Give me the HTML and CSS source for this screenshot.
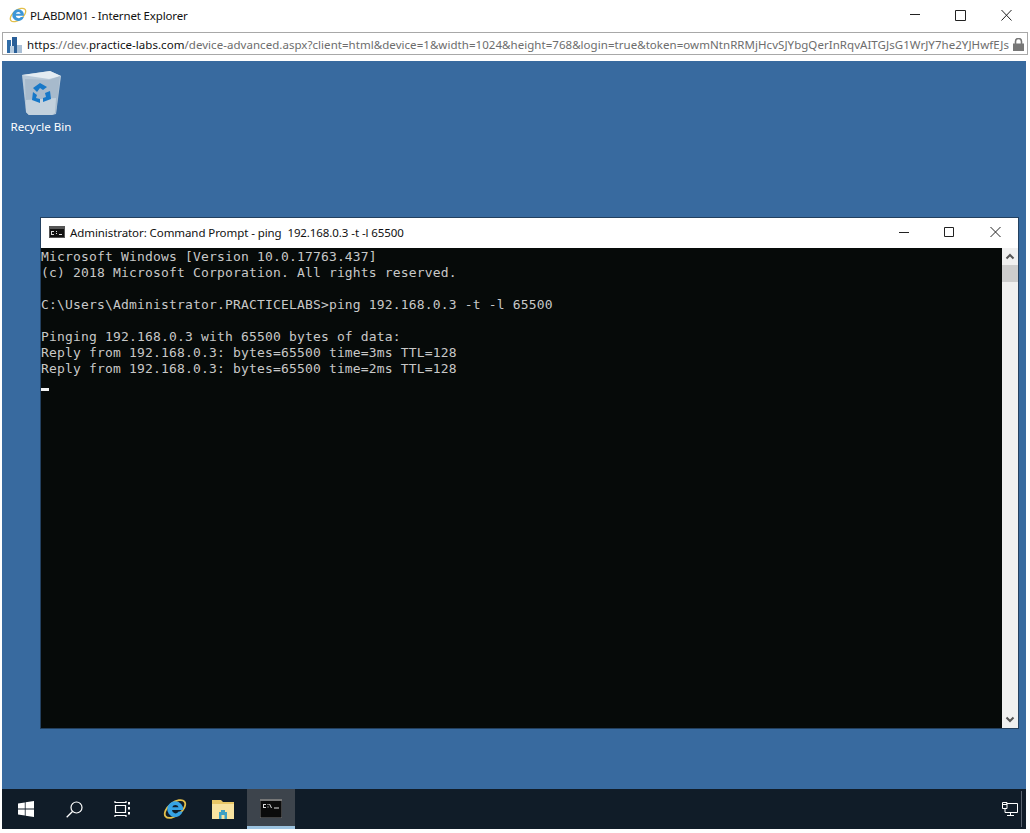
FILE: index.html
```html
<!DOCTYPE html>
<html lang="en">
<head>
<meta charset="utf-8">
<title>PLABDM01 - Internet Explorer</title>
<link rel="stylesheet" href="styles.css">
</head>
<body>
<div class="ie">
  <header class="ie-title">
    <svg class="ie-logo" width="18" height="18" viewBox="0 0 18 18"><ellipse cx="9" cy="9" rx="9" ry="4.800" transform="rotate(-38 9 9)" fill="none" stroke="#e3bf4a" stroke-width="1.300"/><path d="M9.300 3.200a5.800 5.800 0 0 1 5.700 6.500H6.800a2.700 2.700 0 0 0 5 1.200h3a5.900 5.900 0 1 1-5.500-7.700zM6.900 7.700h4.800a2.500 2.500 0 0 0-4.800 0z" fill="#3c96d8"/></svg>
    <span class="ie-title-text">PLABDM01 - Internet Explorer</span>
    <div class="win-btns ie-btns">
      <svg width="11" height="12" viewBox="0 0 11 12"><path d="M1 5.500h10" stroke="#222" fill="none"/></svg>
      <svg width="11" height="12" viewBox="0 0 11 12"><path d="M.5 1.500h10v10H.5z" stroke="#222" fill="none"/></svg>
      <svg width="11" height="12" viewBox="0 0 11 12"><path d="M.5 1l10 10.500M10.500 1L.5 11.500" stroke="#222" fill="none"/></svg>
    </div>
  </header>
  <div class="ie-address">
    <svg class="site-icon" width="15" height="16" viewBox="0 0 15 16"><path d="M0 3h4v13H0z" fill="#2f6ca8"/><path d="M5 0h5v16H5z" fill="#2a5f98"/><path d="M10 8h5v8h-5z" fill="#a9bfd6"/><path d="M3 9h4v7H3z" fill="#b9cde0"/></svg>
    <div class="url"><span class="url-dark">https</span>://dev.<span class="url-dark">practice-labs.com</span>/device-advanced.aspx?client=html&amp;device=1&amp;width=1024&amp;height=768&amp;login=true&amp;token=owmNtnRRMjHcvSJYbgQerInRqvAITGJsG1WrJY7he2YJHwfEJs</div>
    <svg class="lock" width="11" height="13" viewBox="0 0 11 13"><path d="M2.500 6V3.500a3 3 0 0 1 6 0V6" fill="none" stroke="#777" stroke-width="1.600"/><path d="M0 5.500h11V13H0z" fill="#777"/></svg>
  </div>
  <main class="desktop">
    <div class="recycle">
      <svg width="42" height="46" viewBox="0 0 42 46">
        <path d="M2 5L30 1l11 5-5 38-4 1H9l-3-3z" fill="#b8c9d8"/>
        <path d="M2 5L30 1l11 5-12 3z" fill="#e4ecf2"/>
        <path d="M5 9l24 1 11-4-4 37-3 2H9l-3-3z" fill="#a3b7c9" opacity=".8"/>
        <path d="M6 30l30-2-1 15-3 2H9l-3-3z" fill="#c3d1dd"/>
        <path d="M13 18l7-5 7 4-4 3-3-2-3 4zM30 21l1 8-8 3v-4l3-1-1-4zM13 22l4 3-1 3 4 1v4l-8-3z" fill="#1778c8"/>
      </svg>
      <span class="recycle-label">Recycle Bin</span>
    </div>
    <section class="cmd">
      <header class="cmd-title">
        <svg class="cmd-icon" width="16" height="12" viewBox="0 0 16 12"><path d="M0 0h16v12H0z" fill="#555"/><path d="M1 3h14v8H1z" fill="#111"/><path d="M3 5h2v1H3v2h2v1H2V5zM7 5h1v1H7zM7 7h1v1H7zM10 8h3v1h-3z" fill="#ddd"/></svg>
        <span class="cmd-title-text">Administrator: Command Prompt - ping&nbsp; 192.168.0.3 -t -l 65500</span>
        <div class="win-btns cmd-btns">
          <svg width="11" height="12" viewBox="0 0 11 12"><path d="M1 6.500h10" stroke="#222" fill="none"/></svg>
          <svg width="11" height="12" viewBox="0 0 11 12"><path d="M.5 1.500h9v9h-9z" stroke="#222" fill="none"/></svg>
          <svg width="11" height="12" viewBox="0 0 11 12"><path d="M.5 1l10 10M10.500 1L.5 11" stroke="#222" fill="none"/></svg>
        </div>
      </header>
      <div class="cmd-body">
        <pre class="console">Microsoft Windows [Version 10.0.17763.437]
(c) 2018 Microsoft Corporation. All rights reserved.

C:\Users\Administrator.PRACTICELABS&gt;ping 192.168.0.3 -t -l 65500

Pinging 192.168.0.3 with 65500 bytes of data:
Reply from 192.168.0.3: bytes=65500 time=3ms TTL=128
Reply from 192.168.0.3: bytes=65500 time=2ms TTL=128
<span class="cursor"></span></pre>
        <div class="scrollbar">
          <svg width="16" height="17" viewBox="0 0 16 17"><path d="M4.500 10.500L8 7l3.500 3.500" fill="none" stroke="#555" stroke-width="2"/></svg>
          <div class="thumb"></div>
          <div class="track"></div>
          <svg width="16" height="17" viewBox="0 0 16 17"><path d="M4.500 6.500L8 10l3.500-3.500" fill="none" stroke="#555" stroke-width="2"/></svg>
        </div>
      </div>
    </section>
    <footer class="taskbar">
      <div class="tb-item">
        <svg width="16" height="16" viewBox="0 0 16 16"><path d="M0 2.400L6.800 1.400v6.200H0zM7.600 1.300L16 0v7.600H7.600zM0 8.400h6.800v6.200L0 13.600zM7.600 8.400H16V16l-8.400-1.300z" fill="#fff"/></svg>
      </div>
      <div class="tb-item">
        <svg width="17" height="17" viewBox="0 0 17 17"><circle cx="10.500" cy="6.500" r="5.500" fill="none" stroke="#fff" stroke-width="1.200"/><path d="M6.500 10.500L.7 16.300" stroke="#fff" stroke-width="1.300"/></svg>
      </div>
      <div class="tb-item">
        <svg width="17" height="16" viewBox="0 0 17 16"><path d="M1 0v1.500h11V0M1 16v-1.500h11V16M1.500 4.500h10v7h-10z" fill="none" stroke="#fff" stroke-width="1.200"/><path d="M14 1h2v2.500h-2zM14 6h2v2.500h-2zM14 11h2v2.500h-2z" fill="#fff"/></svg>
      </div>
      <div class="tb-item tb-pinned">
        <svg width="24" height="24" viewBox="0 0 24 24"><ellipse cx="12" cy="12" rx="12" ry="6.400" transform="rotate(-38 12 12)" fill="none" stroke="#e3bf4a" stroke-width="1.800"/><path d="M12.400 4.300a7.800 7.800 0 0 1 7.700 8.700H9a3.600 3.600 0 0 0 6.700 1.600h4A7.900 7.900 0 1 1 12.400 4.300zM9.200 10.300h6.400a3.400 3.400 0 0 0-6.400 0z" fill="#36a3e4"/></svg>
      </div>
      <div class="tb-item">
        <svg width="22" height="20" viewBox="0 0 22 20"><path d="M0 1h9l2 2h11v17H0z" fill="#e9c766"/><path d="M0 5h22v15H0z" fill="#f8e3a0"/><path d="M7 13h8v7H7z" fill="#3fa1c4"/><path d="M9 11h4v3H9z" fill="#3fa1c4"/><path d="M9.500 16h3v4h-3z" fill="#f8e3a0"/></svg>
      </div>
      <div class="tb-item tb-active">
        <svg width="22" height="19" viewBox="0 0 22 19"><path d="M0 0h22v19H0z" fill="#777"/><path d="M.5 2h21v16.500H.5z" fill="#0b0b0b"/><path d="M3 5h3v1H4v2h2v1H3zM7.500 5h1v1h-1zM7.500 7.500h1v1h-1zM10 5l2 4h-1L9 5zM14 8.500h5v1h-5z" fill="#ddd"/></svg>
      </div>
      <div class="tb-tray">
        <svg width="16" height="14" viewBox="0 0 16 14"><path d="M4.500 1.500h11v9h-11M8.500 10.500v2.500M5 13.500h7M.5.500h4.500v6H.500zM.5 2.500h4.500M3 6.500v4h2" fill="none" stroke="#fff"/></svg>
        <div class="tb-sep"></div>
      </div>
    </footer>
  </main>
</div>
</body>
</html>
```
FILE: styles.css
```css
* { box-sizing: border-box; }
html, body { margin: 0; padding: 0; background: #fff; }
body { width: 1030px; height: 833px; overflow: hidden; font-family: "Noto Sans", "Open Sans", sans-serif; }
.ie { display: flex; flex-direction: column; height: 833px; padding-bottom: 4px; }
.ie-title { height: 32px; display: flex; align-items: center; padding: 0 18px 2px 9px; flex: none; }
.ie-logo { flex: none; margin-right: 3px; }
.ie-title-text { font-size: 11.5px; letter-spacing: -0.15px; color: #111; }
.win-btns { margin-left: auto; display: flex; gap: 35px; }
.ie-address { height: 23px; margin: 0 2px 6px; border: 1px solid #a8a8a8; display: flex; align-items: center; padding: 2px 3px 0 4px; flex: none; background: #fff; }
.site-icon { flex: none; margin-right: 5px; }
.url { flex: 1; min-width: 0; white-space: nowrap; overflow: hidden; font-size: 11.5px; letter-spacing: 0.045px; color: #6d6d6d; }
.url-dark { color: #111; }
.lock { flex: none; margin-left: 2px; }
.desktop { position: relative; flex: 1; margin: 0 4px 0 2px; background: #386a9f; display: flex; flex-direction: column; justify-content: flex-end; }
.recycle { position: absolute; left: 0; top: 9px; width: 78px; display: flex; flex-direction: column; align-items: center; gap: 3px; }
.recycle-label { font-size: 11.6px; color: #fff; line-height: 16px; }
.cmd { position: absolute; left: 38px; top: 156px; width: 979px; height: 512px; border: 1px solid #23405f; background: #fff; display: flex; flex-direction: column; }
.cmd-title { height: 30px; display: flex; align-items: center; padding: 0 17px 2px 8px; flex: none; }
.cmd-icon { flex: none; margin-right: 5px; }
.cmd-title-text { font-size: 11.5px; letter-spacing: -0.08px; color: #111; white-space: nowrap; }
.cmd-body { flex: 1; display: flex; min-height: 0; background: #0c0c0c; }
.console { margin: 0; padding-top: 1px; flex: 1; background: #060a09; color: #c8c8c8; font-family: "DejaVu Sans Mono", monospace; font-size: 13px; letter-spacing: 0.17px; line-height: 16px; overflow: hidden; }
.cursor { display: inline-block; width: 8px; height: 3px; background: #f2f2f2; vertical-align: top; margin-top: 11px; }
.scrollbar { width: 16px; flex: none; background: #f0f0f0; display: flex; flex-direction: column; }
.thumb { height: 17px; background: #cdcdcd; flex: none; }
.track { flex: 1; }
.taskbar { height: 40px; background: #101c28; display: flex; align-items: stretch; flex: none; }
.tb-item { width: 48px; flex: none; display: flex; align-items: center; justify-content: center; }
.tb-pinned { margin-left: 5px; }
.tb-active { background: #3d444c; border-bottom: 3px solid #9cc3e0; padding-top: 2px; }
.tb-tray { margin-left: auto; display: flex; align-items: center; gap: 3px; }
.tb-sep { width: 1px; height: 36px; background: #5a6470; margin-right: 4px; }
```
